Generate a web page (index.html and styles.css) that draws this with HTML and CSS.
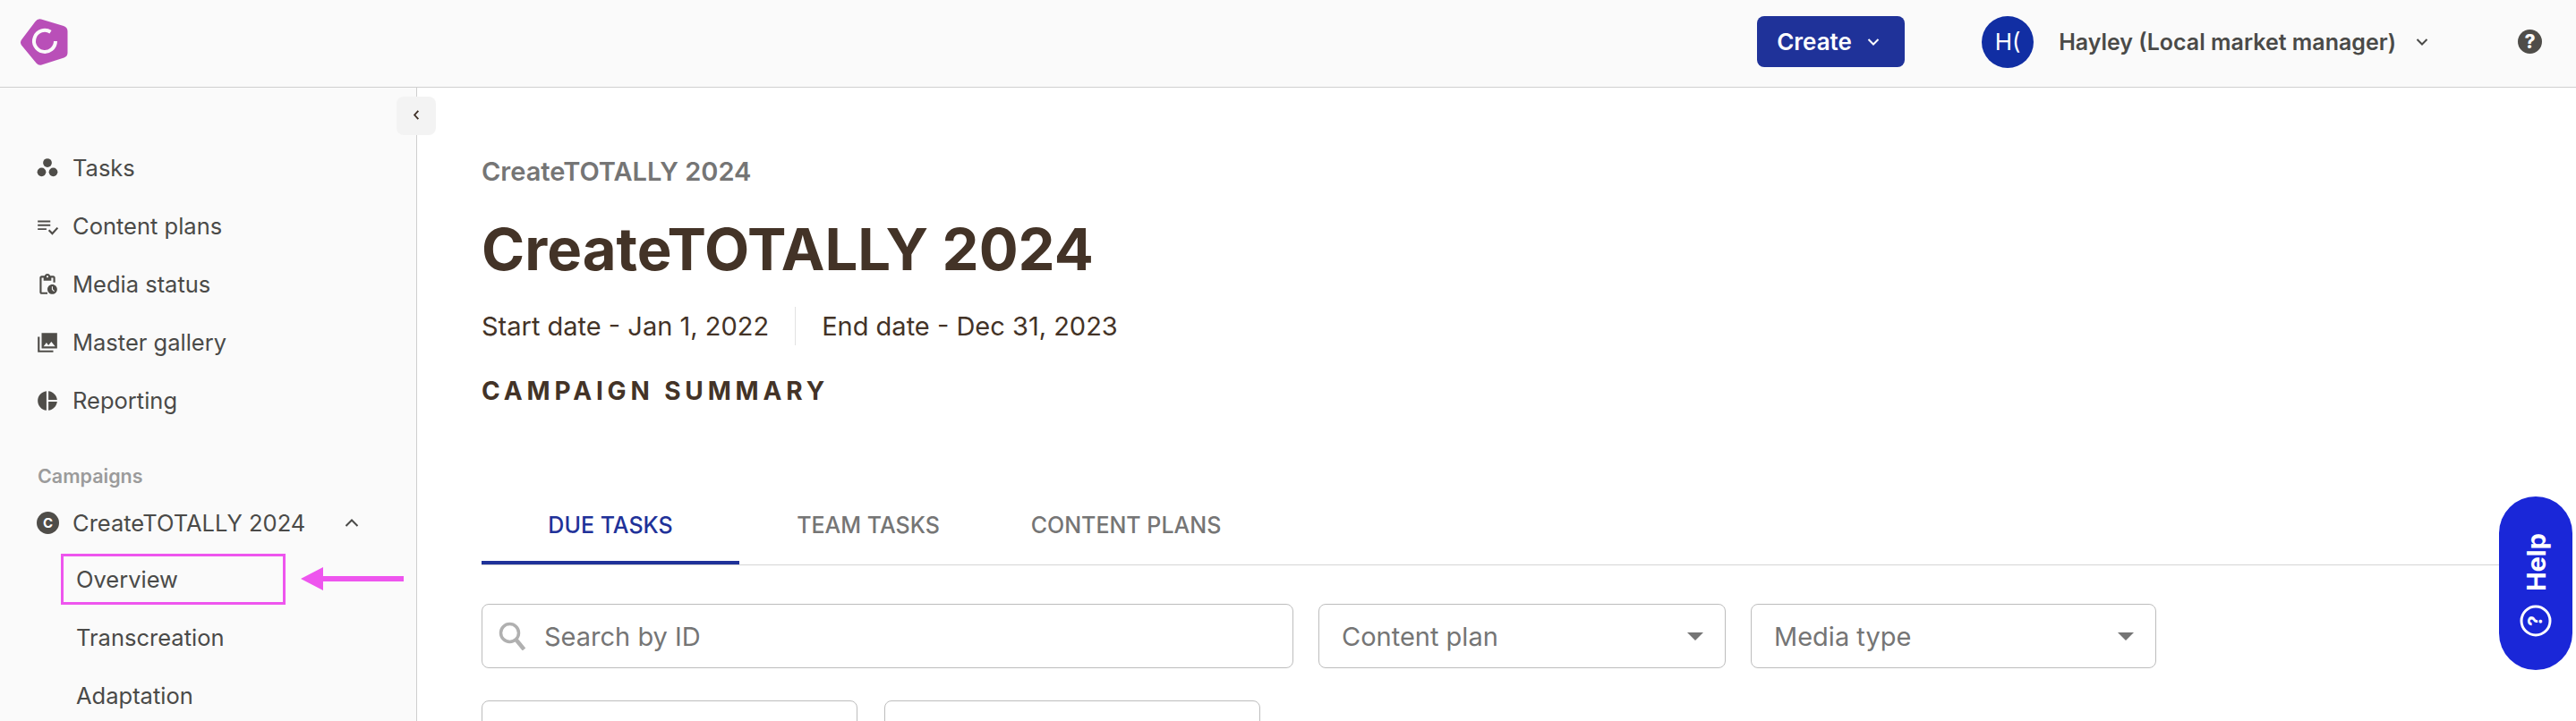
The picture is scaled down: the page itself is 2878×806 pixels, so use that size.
FILE: index.html
```html
<!DOCTYPE html>
<html lang="en">
  <head>
    <meta charset="UTF-8" />
    <title>CreateTOTALLY 2024</title>
    <link rel="stylesheet" href="styles.css">
  </head>
  <body>
    <header class="topbar">
      <svg class="logo" viewBox="0 0 54 54" width="54" height="54">
        <path d="M24 1.500 L49 9 Q53.500 10.500 53.500 15 L53.500 39 Q53.500 43 49.500 44.500 L24.500 52.500 Q21 53.500 18.500 50.500 L2 30.500 Q0 27.500 2 24.500 L17.500 4 Q20 0.500 24 1.500 Z" fill="#b94fb8" />
        <path d="M34.500 15.800 A 12 12 0 1 0 40 26" fill="none" stroke="#fafafa" stroke-width="4" />
      </svg>
      <button class="create-btn">Create
        <svg class="chev" viewBox="0 0 14 8" width="14" height="8"><path d="M1.500 1 L7 6.500 L12.500 1" /></svg>
      </button>
      <div class="avatar">H(</div>
      <div class="user-name">Hayley (Local market manager)</div>
      <svg class="chev user-chev" viewBox="0 0 14 8" width="14" height="8"><path d="M1.500 1 L7 6.500 L12.500 1" /></svg>
      <div class="help-dot">?</div>
    </header>

    <div class="layout">
      <aside class="sidebar">
        <button class="collapse-btn">
          <svg class="chev" viewBox="0 0 8 14" width="8" height="13"><path d="M6.500 2 L2 7 L6.500 12" /></svg>
        </button>

        <nav class="nav">
          <a class="nav-item">
            <svg class="nav-icon" viewBox="0 0 24 24"><circle cx="12" cy="6.500" r="4.500" /><circle cx="6" cy="16" r="4.500" /><circle cx="18" cy="16" r="4.500" /></svg>
            Tasks
          </a>
          <a class="nav-item">
            <svg class="nav-icon" viewBox="0 0 24 24"><path d="M2 6h13v1.800H2zM2 10h13v1.800H2zM2 14h9v1.800H2z" /><path d="M13.500 16 L17 19.500 L22.500 13.500" fill="none" stroke="#4f4d49" stroke-width="2" /></svg>
            Content plans
          </a>
          <a class="nav-item">
            <svg class="nav-icon" viewBox="0 0 24 24"><path d="M17,12c-2.760,0-5,2.240-5,5s2.240,5,5,5c2.760,0,5-2.240,5-5S19.760,12,17,12z M18.650,19.350l-2.150-2.150V14h1v2.790l1.850,1.850 L18.650,19.350z M18,3h-3.180C14.400,1.840,13.300,1,12,1S9.600,1.840,9.180,3H6C4.900,3,4,3.900,4,5v15c0,1.100,0.900,2,2,2h6v-2H6V5h2v3h8V5h2v5h2V5 C20,3.900,19.100,3,18,3z M12,5c-0.550,0-1-0.450-1-1c0-0.550,0.450-1,1-1s1,0.450,1,1C13,4.550,12.550,5,12,5z" /></svg>
            Media status
          </a>
          <a class="nav-item">
            <svg class="nav-icon" viewBox="0 0 24 24"><path d="M22 16V2H6v16h16zm-11-4l2.030 2.710L16 11l4 5H8l3-4zM2 6v16h16v-2H4V6H2z" /></svg>
            Master gallery
          </a>
          <a class="nav-item">
            <svg class="nav-icon" viewBox="0 0 24 24"><path d="M11 2v20c-5.070-.5-9-4.790-9-10s3.930-9.500 9-10zm2.030 0v8.990H22c-.47-4.740-4.240-8.520-8.970-8.990zm0 11.010V22c4.740-.47 8.500-4.250 8.970-8.990h-8.970z" /></svg>
            Reporting
          </a>
        </nav>

        <div class="nav-label">Campaigns</div>
        <a class="nav-item campaign">
          <span class="campaign-badge">C</span>
          CreateTOTALLY 2024
          <svg class="chev campaign-chev" viewBox="0 0 16 9" width="16" height="9"><path d="M1.500 8 L8 1.500 L14.500 8" /></svg>
        </a>
        <a class="sub-item marked">Overview</a>
        <a class="sub-item">Transcreation</a>
        <a class="sub-item">Adaptation</a>

        <svg class="arrow" viewBox="0 0 115 26" width="115" height="26">
          <path d="M0 13 L25 0 L25 10 L115 10 L115 16 L25 16 L25 26 Z" fill="#ee55ee" />
        </svg>
      </aside>

      <main class="main">
        <div class="breadcrumb">CreateTOTALLY 2024</div>
        <h1 class="title">CreateTOTALLY 2024</h1>
        <div class="dates">
          <span>Start date - Jan 1, 2022</span>
          <span class="date-end">End date - Dec 31, 2023</span>
        </div>
        <h2 class="summary">CAMPAIGN SUMMARY</h2>

        <div class="tabs">
          <div class="tab active">DUE TASKS</div>
          <div class="tab">TEAM TASKS</div>
          <div class="tab">CONTENT PLANS</div>
        </div>

        <div class="filters">
          <div class="field search">
            <svg class="search-icon" viewBox="0 0 32 32" width="32" height="32"><circle cx="12.500" cy="12.500" r="10" fill="none" stroke="#b0b0b0" stroke-width="3.500" /><path d="M19.500 20 L28.500 31" stroke="#b0b0b0" stroke-width="4.500" /></svg>
            Search by ID
          </div>
          <div class="field select plan">Content plan</div>
          <div class="field select media">Media type</div>
        </div>
        <div class="filters second">
          <div class="field short"></div>
          <div class="field short"></div>
        </div>
      </main>
    </div>

    <div class="help-tab">
      <span class="help-text">Help</span>
      <svg class="help-icon" viewBox="0 0 36 36" width="36" height="36">
        <circle cx="18" cy="18" r="16" fill="none" stroke="#fff" stroke-width="3" />
        <text x="18" y="25" text-anchor="middle" class="help-q">?</text>
      </svg>
    </div>
  </body>
</html>
```

FILE: styles.css
```css
* {
  box-sizing: border-box;
}
html,
body {
  margin: 0;
  height: 806px;
  overflow: hidden;
}
body {
  font-family: Inter, "Liberation Sans", sans-serif;
  color: #4a4a48;
  background-color: #fff;
}
.chev path {
  fill: none;
  stroke: currentColor;
  stroke-width: 2;
}

/* top bar */
.topbar {
  display: flex;
  align-items: center;
  height: 98px;
  padding: 0 0 4px 22px;
  background-color: #fafafa;
  border-bottom: 1px solid #cfcfcf;
}
.logo {
  margin-right: auto;
}
.create-btn {
  display: flex;
  align-items: center;
  justify-content: space-between;
  width: 165px;
  height: 57px;
  padding: 0 28px 0 22px;
  font-family: inherit;
  font-size: 26px;
  font-weight: 600;
  color: #fff;
  background-color: #1f3299;
  border: none;
  border-radius: 8px;
}
.avatar {
  width: 58px;
  height: 58px;
  margin-left: 86px;
  line-height: 58px;
  text-align: center;
  font-size: 26px;
  color: #fff;
  background-color: #112ea3;
  border-radius: 50%;
}
.user-name {
  margin-left: 28px;
  font-size: 25px;
  font-weight: 600;
}
.user-chev {
  margin-left: 22px;
}
.help-dot {
  width: 27px;
  height: 27px;
  margin: 0 38px 0 100px;
  line-height: 27px;
  text-align: center;
  font-size: 21px;
  font-weight: 800;
  color: #fafafa;
  background-color: #4f4d49;
  border-radius: 50%;
}

/* sidebar */
.layout {
  display: flex;
  height: 708px;
  overflow: hidden;
}
.sidebar {
  position: relative;
  flex: none;
  width: 466px;
  padding-top: 61px;
  background-color: #fafafa;
  border-right: 1px solid #cfcfcf;
}
.collapse-btn {
  position: absolute;
  top: 10px;
  left: 443px;
  width: 44px;
  height: 43px;
  padding: 0;
  color: #3f3027;
  background-color: #f3f3f3;
  border: none;
  border-radius: 8px;
}
.nav {
  display: flex;
  flex-direction: column;
  gap: 8px;
}
.nav-item {
  display: flex;
  align-items: center;
  height: 57px;
  padding-left: 40px;
  font-size: 25.5px;
}
.nav-icon {
  flex: none;
  width: 26px;
  height: 26px;
  margin-right: 15px;
  fill: #4f4d49;
}
.nav-label {
  margin-top: 42px;
  padding-left: 42px;
  line-height: 28px;
  font-size: 21.5px;
  font-weight: 600;
  color: #9b9b9b;
}
.campaign {
  margin: 10px 0 6px;
  padding-left: 41px;
}
.campaign-badge {
  width: 25px;
  height: 25px;
  margin-right: 15px;
  line-height: 25px;
  text-align: center;
  font-size: 15px;
  font-weight: 700;
  color: #fff;
  background-color: #4f4d49;
  border-radius: 50%;
}
.campaign-chev {
  margin-left: 44px;
}
.sub-item {
  display: block;
  width: 251px;
  height: 57px;
  margin: 0 0 8px 68px;
  padding-left: 17px;
  line-height: 57px;
  font-size: 25.5px;
}
.sub-item.marked {
  padding-left: 14px;
  line-height: 51px;
  border: 3px solid #ee55ee;
}
.arrow {
  position: absolute;
  top: 536px;
  left: 336px;
}

/* main column */
.main {
  flex: 1;
  padding: 78px 0 0 72px;
  color: #433327;
}
.breadcrumb {
  line-height: 32px;
  font-size: 29px;
  font-weight: 600;
  color: #757575;
}
.title {
  margin: 31px 0 0;
  line-height: 80px;
  font-size: 65.2px;
  font-weight: 700;
}
.dates {
  display: flex;
  align-items: center;
  height: 43px;
  margin-top: 24px;
  font-size: 29px;
}
.date-end {
  margin-left: 29px;
  padding-left: 29px;
  line-height: 43px;
  border-left: 1px solid #e2e2e2;
}
.summary {
  margin: 34px 0 0;
  line-height: 34px;
  font-size: 28px;
  font-weight: 700;
  letter-spacing: 4.85px;
}
.tabs {
  display: flex;
  width: 2292px;
  margin-top: 89px;
  border-bottom: 1px solid #d5d5d5;
}
.tab {
  width: 288px;
  height: 88px;
  padding-top: 4px;
  line-height: 80px;
  text-align: center;
  font-size: 25px;
  font-weight: 500;
  color: #757575;
  border-bottom: 4px solid transparent;
}
.tab.active {
  color: #1f3299;
  border-bottom-color: #1f3299;
}
.filters {
  display: flex;
  gap: 28px;
  margin-top: 43px;
}
.filters.second {
  gap: 30px;
  margin-top: 36px;
}
.field {
  display: flex;
  align-items: center;
  flex: none;
  height: 72px;
  padding-left: 25px;
  font-size: 29px;
  color: #757575;
  background-color: #fff;
  border: 1px solid #bdbdbd;
  border-radius: 8px;
}
.search {
  width: 907px;
  padding-left: 18px;
}
.search-icon {
  margin-right: 19px;
}
.select {
  position: relative;
}
.select::after {
  content: "";
  position: absolute;
  top: 31px;
  right: 24px;
  border-top: 9px solid #757575;
  border-left: 9px solid transparent;
  border-right: 9px solid transparent;
}
.plan {
  width: 455px;
}
.media {
  width: 453px;
}
.short {
  width: 420px;
}

/* floating help */
.help-tab {
  position: fixed;
  top: 555px;
  left: 2792px;
  display: flex;
  flex-direction: column;
  align-items: center;
  gap: 15px;
  width: 82px;
  height: 194px;
  padding-top: 41px;
  background-color: #1a27d8;
  border-radius: 41px;
}
.help-text {
  writing-mode: vertical-rl;
  transform: rotate(180deg);
  font-size: 29px;
  font-weight: 700;
  color: #fff;
}
.help-icon {
  transform: rotate(-90deg);
}
.help-q {
  font-family: Inter, sans-serif;
  font-size: 21px;
  font-weight: 700;
  fill: #fff;
}
```
